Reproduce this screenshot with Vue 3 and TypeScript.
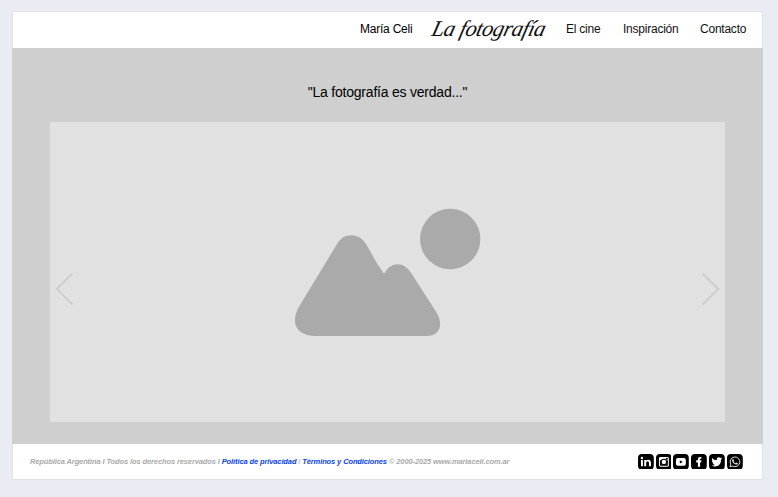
<script setup lang="ts">
interface NavItem {
  label: string
  kind: string
}

const nav: NavItem[] = [
  { label: 'María Celi', kind: 'name' },
  { label: 'La fotografía', kind: 'script' },
  { label: 'El cine', kind: 'cine' },
  { label: 'Inspiración', kind: 'inspiration' },
  { label: 'Contacto', kind: 'contact' },
]
</script>

<template>
  <div class="page">
    <div class="frame">
      <header class="header">
        <nav class="nav">
          <a v-for="item in nav" :key="item.kind" class="nav-item" :class="item.kind">{{ item.label }}</a>
        </nav>
      </header>

      <main class="main">
        <h1 class="quote">"La fotografía es verdad..."</h1>
        <section class="carousel">
          <svg class="arrow" viewBox="0 0 19 34"><path d="M17.5 1.5 1.8 17 17.5 32.5" /></svg>
          <svg class="picture" viewBox="0 0 187 128">
            <circle cx="156.200" cy="31" r="30.200" />
            <path d="M41.500 38.500C45.500 31 50 27.200 57 27.200C64 27.200 69.500 31 73.500 38.500L82.500 54.500L90 65.800C93.500 59.500 98 56.200 103.500 56.200C109.500 56.200 113.500 59.500 117.500 65.500L142.500 104.500C149.500 116 146.500 128 132 128L22.500 128C3 128-4 116 4.500 99.500Z" />
          </svg>
          <svg class="arrow" viewBox="0 0 19 34"><path d="M1.500 1.500 17.200 17 1.500 32.500" /></svg>
        </section>
      </main>

      <footer class="footer">
        <p class="legal"><span>República Argentina I Todos los derechos reservados I </span><a>Política de privacidad</a><span class="thin"> I </span><a>Términos y Condiciones</a><span> © 2000-2025 www.mariaceli.com.ar</span></p>
        <div class="social">
          <svg viewBox="0 0 16 16">
            <rect width="16" height="16" rx="4" />
            <circle class="w" cx="4" cy="4" r="1.200" />
            <path class="w" d="M3 6h2v6.500H3zM6.300 6h1.900v.8c1-1.500 4.900-1.300 4.900 1.700v4h-2V9c0-2-2.800-1.900-2.800 0v3.500h-2z" />
          </svg>
          <svg viewBox="0 0 16 16">
            <rect width="16" height="16" rx="4" />
            <rect class="w" x="3" y="3" width="10" height="10" rx="1.500" />
            <path d="M4 6.300h1.500V12H4zM10.500 6.300H12V12h-1.500zM4 10.500h8V12H4zM10 4h2v1.600h-2z" />
            <circle cx="8" cy="8" r="3.200" /><circle class="w" cx="8" cy="8" r="2.200" />
          </svg>
          <svg viewBox="0 0 16 16">
            <rect width="16" height="16" rx="4" />
            <rect class="w" x="3" y="4" width="10" height="8" rx="2" />
            <path d="m6.900 6.300 3 1.700-3 1.700z" />
          </svg>
          <svg viewBox="0 0 16 16">
            <rect width="16" height="16" rx="4" />
            <path class="w" d="M7 13V8.500H5.300V6.400H7V5.300c0-1.800 1.200-2.600 3.500-2.200v1.800h-.8c-.7 0-.8.3-.8.800v.7h1.600l-.2 2.100H9.200V13z" />
          </svg>
          <svg viewBox="0 0 16 16">
            <rect width="16" height="16" rx="4" />
            <path class="w" d="M3.200 4c1.300 1.500 2.800 2.200 4.700 2.200C7.400 3.400 10 2.500 11.600 4l1.500-.5-.8 1.300 1-.2-1.100 1.200c.3 5.700-5.300 8.300-9.500 5.900 1.200.1 2.200-.2 3.100-.9-1.100 0-1.700-.6-2-1.500h.9C3.600 8.900 3 8.100 3 7.100l.9.200C2.900 6.400 2.700 5.200 3.200 4z" />
          </svg>
          <svg viewBox="0 0 16 16">
            <rect width="16" height="16" rx="4" />
            <path class="outline" d="m3.100 12.900.7-2.600a4.900 4.900 0 1 1 1.900 1.900z" />
            <path class="handset" d="m6.300 5.100.8 1.500-.5.700c.5.900 1.100 1.500 2.100 2l.8-.8 1.500.8c-.1 1.300-1.100 1.700-2.300 1.300C6.800 9.900 5.600 8.600 5.200 7.100c-.2-.9.200-1.800 1.100-2z" />
          </svg>
        </div>
      </footer>
    </div>
  </div>
</template>

<style>
body {
  background: #e9edf3;
}
</style>

<style scoped>
.page {
  box-sizing: border-box;
  height: 497px;
  padding: 11px 15px 17px 12px;
  font-family: "Liberation Sans", Arial, sans-serif;
}

.frame {
  box-sizing: border-box;
  display: grid;
  grid-template-rows: 36px 396px 1fr;
  height: 469px;
  border: 1px solid #e0e2e4;
  background: #fff;
}

.header {
  display: flex;
  justify-content: flex-end;
  padding-right: 16px;
}

.nav {
  display: flex;
  align-items: center;
  font-size: 12px;
  line-height: 16px;
  letter-spacing: -0.230px;
  color: #111;
  white-space: nowrap;
}

.nav-item {
  display: block;
  padding-bottom: 2px;
}

.name {
  width: 72px;
  color: #000;
}

.script {
  width: 134px;
  font-family: "Brush Script MT", "Snell Roundhand", cursive;
  font-size: 22.500px;
  font-style: italic;
  line-height: 30px;
  letter-spacing: -0.500px;
  transform: skewX(-14deg);
}

.cine {
  width: 57px;
}

.inspiration {
  width: 77px;
}

.contact {
  width: 46px;
}

.main {
  display: flex;
  flex-direction: column;
  margin: 0 -1px;
  padding: 34px 38px 0;
  background: #cfcfcf;
}

.quote {
  margin: 0;
  height: 40px;
  font-size: 14px;
  line-height: 20px;
  font-weight: 400;
  letter-spacing: -0.220px;
  text-align: center;
  color: #000;
}

.carousel {
  box-sizing: border-box;
  display: flex;
  justify-content: space-between;
  height: 300px;
  padding: 0 5px;
  background: #e1e1e1;
}

.arrow {
  width: 19px;
  height: 34px;
  margin-top: 150px;
  fill: none;
  stroke: #cecece;
  stroke-width: 2;
}

.picture {
  width: 187px;
  height: 128px;
  margin-top: 86px;
  fill: #aaa;
}

.footer {
  display: flex;
  align-items: center;
  justify-content: space-between;
  padding: 0 19.500px 0 17px;
}

.legal {
  margin: 0;
  font-size: 7.500px;
  line-height: 12px;
  font-weight: 700;
  font-style: italic;
  letter-spacing: -0.113px;
  color: #aaa;
  white-space: pre;
}

.legal a {
  color: #0b43e5;
}

.thin {
  font-weight: 400;
}

.social {
  display: flex;
  gap: 2px;
}

.social svg {
  width: 15.800px;
  height: 15.800px;
}

.w {
  fill: #fff;
}

.outline {
  fill: none;
  stroke: #ddd;
  stroke-width: 1;
}

.handset {
  fill: #ddd;
}
</style>
